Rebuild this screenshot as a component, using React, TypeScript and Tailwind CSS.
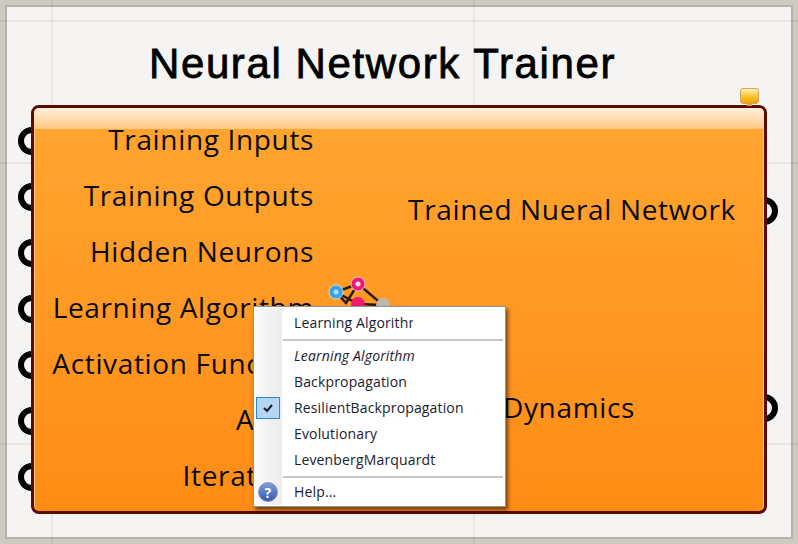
import React from 'react';

const inputs = [
  'Training Inputs',
  'Training Outputs',
  'Hidden Neurons',
  'Learning Algorithm',
  'Activation Function',
  'Alpha',
  'Iterations',
];

const menuItems = ['Backpropagation', 'ResilientBackpropagation', 'Evolutionary', 'LevenbergMarquardt'];

const Port: React.FC = () => <div className="h-[28px] w-[28px] rounded-full border-[6px] border-black" />;

const NetworkIcon: React.FC = () => (
  <svg className="absolute left-[294px] top-[168px]" width="64" height="40" viewBox="0 0 64 40">
    <g stroke="#2a1a08" strokeWidth="2.5" fill="none">
      <path d="M8 16 L30 8 L55 29 L30 28 L8 16" />
      <path d="M8 16 L18 27 L30 8" />
    </g>
    <circle cx="8" cy="16" r="7" fill="#3aa2e0" stroke="#bfe3f5" strokeWidth="1" />
    <circle cx="8" cy="16" r="2.5" fill="#a9def8" />
    <circle cx="30" cy="8" r="7" fill="#ee1a70" stroke="#f8c0d8" strokeWidth="1" />
    <circle cx="30" cy="8" r="2.5" fill="#ffe0ec" />
    <circle cx="30" cy="28" r="7" fill="#ee1a70" />
    <circle cx="55" cy="29" r="7" fill="#bdb9b0" />
  </svg>
);

const MenuSeparator: React.FC = () => <div className="ml-[29px] mr-[2px] h-[2px] bg-[#c8c8c8]" />;

const MenuRow: React.FC<{ label: string; checked?: boolean; italic?: boolean }> = ({ label, checked, italic }) => (
  <div className={`relative flex h-[26px] items-center pb-[2px] pl-[40px] ${italic ? 'italic' : ''}`}>
    {checked && (
      <div className="absolute left-[2px] top-[2px] flex h-[22px] w-[24px] items-center justify-center border border-[#2f86d0] bg-[#b5d5f2]">
        <svg width="12" height="10" viewBox="0 0 12 10">
          <path d="M2 5 L5 8 L10 2" stroke="#1a1a2a" strokeWidth="2" fill="none" />
        </svg>
      </div>
    )}
    {label}
  </div>
);

const ContextMenu: React.FC = () => (
  <div className="absolute left-[253px] top-[306px] z-30 h-[201px] w-[253px] border border-[#8e9497] bg-white font-['Open_Sans','Noto_Sans',sans-serif] text-[14px] tracking-[0.15px] text-[#1a2030] shadow-[2px_3px_4px_rgba(0,0,0,0.55)]">
    <div className="absolute bottom-[1px] left-[1px] top-[1px] w-[27px] bg-gradient-to-r from-[#fafafa] to-[#ececec]" />
    <div className="relative flex flex-col pt-[1px]">
      <div className="flex h-[30px] items-center pb-[2px] pl-[40px]">
        <span className="w-[119px] overflow-hidden whitespace-nowrap">Learning Algorithm</span>
      </div>
      <div className="mt-[1px]">
        <MenuSeparator />
      </div>
      <div className="mt-[2px]">
        <MenuRow label="Learning Algorithm" italic />
        {menuItems.map((item) => (
          <MenuRow key={item} label={item} checked={item === 'ResilientBackpropagation'} />
        ))}
      </div>
      <div className="mt-[3px]">
        <MenuSeparator />
      </div>
      <div className="relative flex h-[28px] items-center pb-[2px] pl-[40px]">
        <div className="absolute left-[4px] top-[4px] flex h-[20px] w-[20px] items-center justify-center rounded-full border border-[#8a94b0] bg-gradient-to-b from-[#7f9cdc] to-[#3a58b0] text-[14px] font-bold text-white">
          ?
        </div>
        Help...
      </div>
    </div>
  </div>
);

const TrainerNode: React.FC = () => (
  <div className="absolute left-[18px] top-[105px] flex items-start">
    <div className="flex flex-col gap-[28px] pt-[22px]">
      {inputs.map((name) => (
        <Port key={name} />
      ))}
    </div>
    <div className="relative z-10 -ml-[15px] h-[409px] w-[736px] rounded-[8px] border-[3px] border-[#5a0c02] bg-gradient-to-b from-[#ffa630] to-[#ff8c14] font-['Open_Sans','Noto_Sans',sans-serif] text-[28px] tracking-[0.65px] text-[#0a0a0a] shadow-[inset_1px_0_0_#ffc98a,inset_-1px_0_0_#ffc98a]">
      <div className="h-[21px] rounded-t-[5px] bg-gradient-to-b from-[#fff0dc] to-[#ffc784]" />
      <div className="flex">
        <div className="-mt-[18px] flex w-[280px] flex-col">
          {inputs.map((name) => (
            <div key={name} className="flex h-[56px] items-center justify-end whitespace-nowrap">
              {name}
            </div>
          ))}
        </div>
        <div className="flex flex-1 flex-col items-end pr-[28px]">
          <div className="mt-[52px] flex h-[56px] items-center whitespace-nowrap">Trained Nueral Network</div>
          <div className="mr-[101px] mt-[142px] flex h-[56px] items-center whitespace-nowrap">Dynamics</div>
        </div>
      </div>
      <NetworkIcon />
    </div>
    <div className="-ml-[17px] flex flex-col gap-[169px] pt-[92px]">
      <Port />
      <Port />
    </div>
  </div>
);

export default function App() {
  return (
    <div className="relative h-[544px] w-[798px] overflow-hidden bg-[#cdcac3] p-[5px]">
      <div className="h-[534px] w-[788px] border-2 border-[#b4b2ab] bg-[#f5f4f2]" />
      {/* faint canvas grid */}
      <div className="absolute left-[51px] top-0 h-full w-[2px] bg-black/5" />
      <div className="absolute left-[473px] top-0 h-full w-[2px] bg-black/5" />
      <div className="absolute left-0 top-[20px] h-[2px] w-full bg-black/5" />
      <div className="absolute left-0 top-[162px] h-[2px] w-full bg-black/5" />
      <div className="absolute left-0 top-[443px] h-[2px] w-full bg-black/5" />

      <h1 className="absolute left-[149px] top-[39px] whitespace-nowrap font-['Liberation_Sans',Arial,sans-serif] text-[42px] font-normal leading-[50px] tracking-[1.6px] text-black [-webkit-text-stroke:0.8px_black]">
        Neural Network Trainer
      </h1>

      <TrainerNode />

      {/* message balloon */}
      <div className="absolute left-[740px] top-[88px] z-20 h-[16px] w-[19px] rounded-[3px] border border-[#c9a860] bg-gradient-to-b from-[#fff0b0] via-[#fcc52a] to-[#f2a010]" />
      <div className="absolute left-[747px] top-[103px] z-20 h-[3px] w-[5px] bg-[#d9a12c]" />

      <ContextMenu />
    </div>
  );
}
